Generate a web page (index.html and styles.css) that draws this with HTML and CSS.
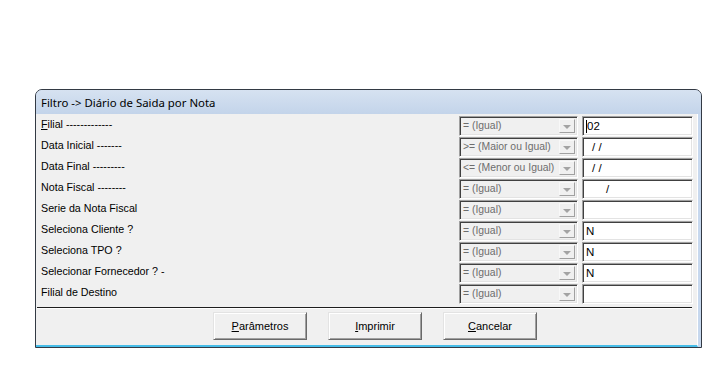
FILE: index.html
```html
<!DOCTYPE html>
<html>
<head>
<meta charset="utf-8">
<link rel="stylesheet" href="styles.css">
</head>
<body>
<div class="page">
  <div class="window">
    <div class="titlebar">Filtro -&gt; Diário de Saida por Nota</div>
    <div class="client">
      <div class="rows">
        <div class="row">
          <span class="label"><u>F</u>ilial -------------</span>
          <div class="combo"><span class="ctext">= (Igual)</span><span class="cbtn"><i class="arrow"></i></span></div>
          <div class="input"><span class="caret"></span>02</div>
        </div>
        <div class="row">
          <span class="label">Data Inicial -------</span>
          <div class="combo"><span class="ctext">&gt;= (Maior ou Igual)</span><span class="cbtn"><i class="arrow"></i></span></div>
          <div class="input date">/ /</div>
        </div>
        <div class="row">
          <span class="label">Data Final ---------</span>
          <div class="combo"><span class="ctext">&lt;= (Menor ou Igual)</span><span class="cbtn"><i class="arrow"></i></span></div>
          <div class="input date">/ /</div>
        </div>
        <div class="row">
          <span class="label">Nota Fiscal --------</span>
          <div class="combo"><span class="ctext">= (Igual)</span><span class="cbtn"><i class="arrow"></i></span></div>
          <div class="input nota">/</div>
        </div>
        <div class="row">
          <span class="label">Serie da Nota Fiscal</span>
          <div class="combo"><span class="ctext">= (Igual)</span><span class="cbtn"><i class="arrow"></i></span></div>
          <div class="input"></div>
        </div>
        <div class="row">
          <span class="label">Seleciona Cliente ?</span>
          <div class="combo"><span class="ctext">= (Igual)</span><span class="cbtn"><i class="arrow"></i></span></div>
          <div class="input">N</div>
        </div>
        <div class="row">
          <span class="label">Seleciona TPO ?</span>
          <div class="combo"><span class="ctext">= (Igual)</span><span class="cbtn"><i class="arrow"></i></span></div>
          <div class="input">N</div>
        </div>
        <div class="row">
          <span class="label">Selecionar Fornecedor ? -</span>
          <div class="combo"><span class="ctext">= (Igual)</span><span class="cbtn"><i class="arrow"></i></span></div>
          <div class="input">N</div>
        </div>
        <div class="row">
          <span class="label">Filial de Destino</span>
          <div class="combo"><span class="ctext">= (Igual)</span><span class="cbtn"><i class="arrow"></i></span></div>
          <div class="input"></div>
        </div>
      </div>
      <div class="separator"></div>
      <div class="buttons">
        <button class="btn"><u>P</u>arâmetros</button>
        <button class="btn"><u>I</u>mprimir</button>
        <button class="btn"><u>C</u>ancelar</button>
      </div>
    </div>
  </div>
</div>
</body>
</html>
```

FILE: styles.css
```css
* { box-sizing: border-box; }
html, body { margin: 0; padding: 0; background: #ffffff; }
.page { padding: 89px 0 0 35px; }
.window {
  width: 667px;
  height: 259px;
  border: 1px solid #333a44;
  border-radius: 7px 7px 0 0;
  background: #c7d8ee;
  display: flex;
  flex-direction: column;
  overflow: hidden;
}
.titlebar {
  height: 24px;
  flex: none;
  padding: 5px 0 0 5px;
  font-family: "Noto Sans", sans-serif;
  font-size: 11.4px;
  color: #000;
  background: linear-gradient(#d6e2f1, #c3d4ea);
}
.client {
  flex: 1;
  background: #f0f0f0;
  margin-right: 3px;
  border-right: 1px solid #ffffff;
  border-bottom: 2px solid #46bde8;
  display: flex;
  flex-direction: column;
}
.rows { padding: 2px 3px 0 5px; display: flex; flex-direction: column; gap: 1px; }
.row {
  display: grid;
  grid-template-columns: 414px 119px 111px;
  column-gap: 4px;
  height: 20px;
}
.label {
  font-family: "Liberation Sans", Arial, sans-serif;
  font-size: 10.7px;
  color: #000;
  padding-top: 2px;
  line-height: 12px;
  white-space: nowrap;
}
.label u { text-decoration-thickness: 1px; text-underline-offset: 1px; }
.combo {
  display: flex;
  align-items: stretch;
  border: 1px solid;
  border-color: #a0a0a0 #ffffff #ffffff #a0a0a0;
  box-shadow: inset 1px 1px 0 #404040, inset -1px -1px 0 #e3e3e3;
  background: #f0f0f0;
  padding: 2px;
}
.ctext {
  flex: 1;
  font-family: "Liberation Sans", Arial, sans-serif;
  font-size: 10.4px;
  color: #6d6d6d;
  padding-left: 1px;
  line-height: 14px;
  white-space: nowrap;
  overflow: hidden;
}
.cbtn {
  width: 16px;
  flex: none;
  border: 1px solid;
  border-color: #f8f8f8 #a0a0a0 #a0a0a0 #f8f8f8;
  display: flex;
  align-items: center;
  justify-content: center;
}
.arrow {
  width: 0; height: 0;
  border-left: 4px solid transparent;
  border-right: 4px solid transparent;
  border-top: 4px solid #a3a3a3;
  margin-top: 1px;
}
.input {
  border: 1px solid;
  border-color: #a0a0a0 #ffffff #ffffff #a0a0a0;
  box-shadow: inset 1px 1px 0 #404040, inset -1px -1px 0 #e3e3e3;
  background: #ffffff;
  font-family: "Liberation Sans", Arial, sans-serif;
  font-size: 11.5px;
  color: #000;
  padding: 2px 0 0 3px;
  line-height: 15px;
  display: flex;
  align-items: flex-start;
  white-space: pre;
}
.input.date { padding-left: 9px; }
.input.nota { padding-left: 23px; }
.caret { width: 1px; height: 13px; background: #000; margin-top: 1px; }
.separator {
  margin: 3px 5px 0 1px;
  height: 2px;
  border-top: 1px solid #1e1e1e;
  border-bottom: 1px solid #ffffff;
}
.buttons {
  display: flex;
  gap: 21px;
  padding: 3px 0 0 177px;
}
.btn {
  width: 94px;
  height: 28px;
  margin: 0;
  font-family: "Liberation Sans", Arial, sans-serif;
  font-size: 11px;
  color: #000;
  background: #f0f0f0;
  border: 1px solid;
  border-color: #e3e3e3 #696969 #696969 #e3e3e3;
  box-shadow: inset 1px 1px 0 #ffffff, inset -1px -1px 0 #a0a0a0;
  padding: 0;
}
.btn u { text-underline-offset: 1px; }
```
